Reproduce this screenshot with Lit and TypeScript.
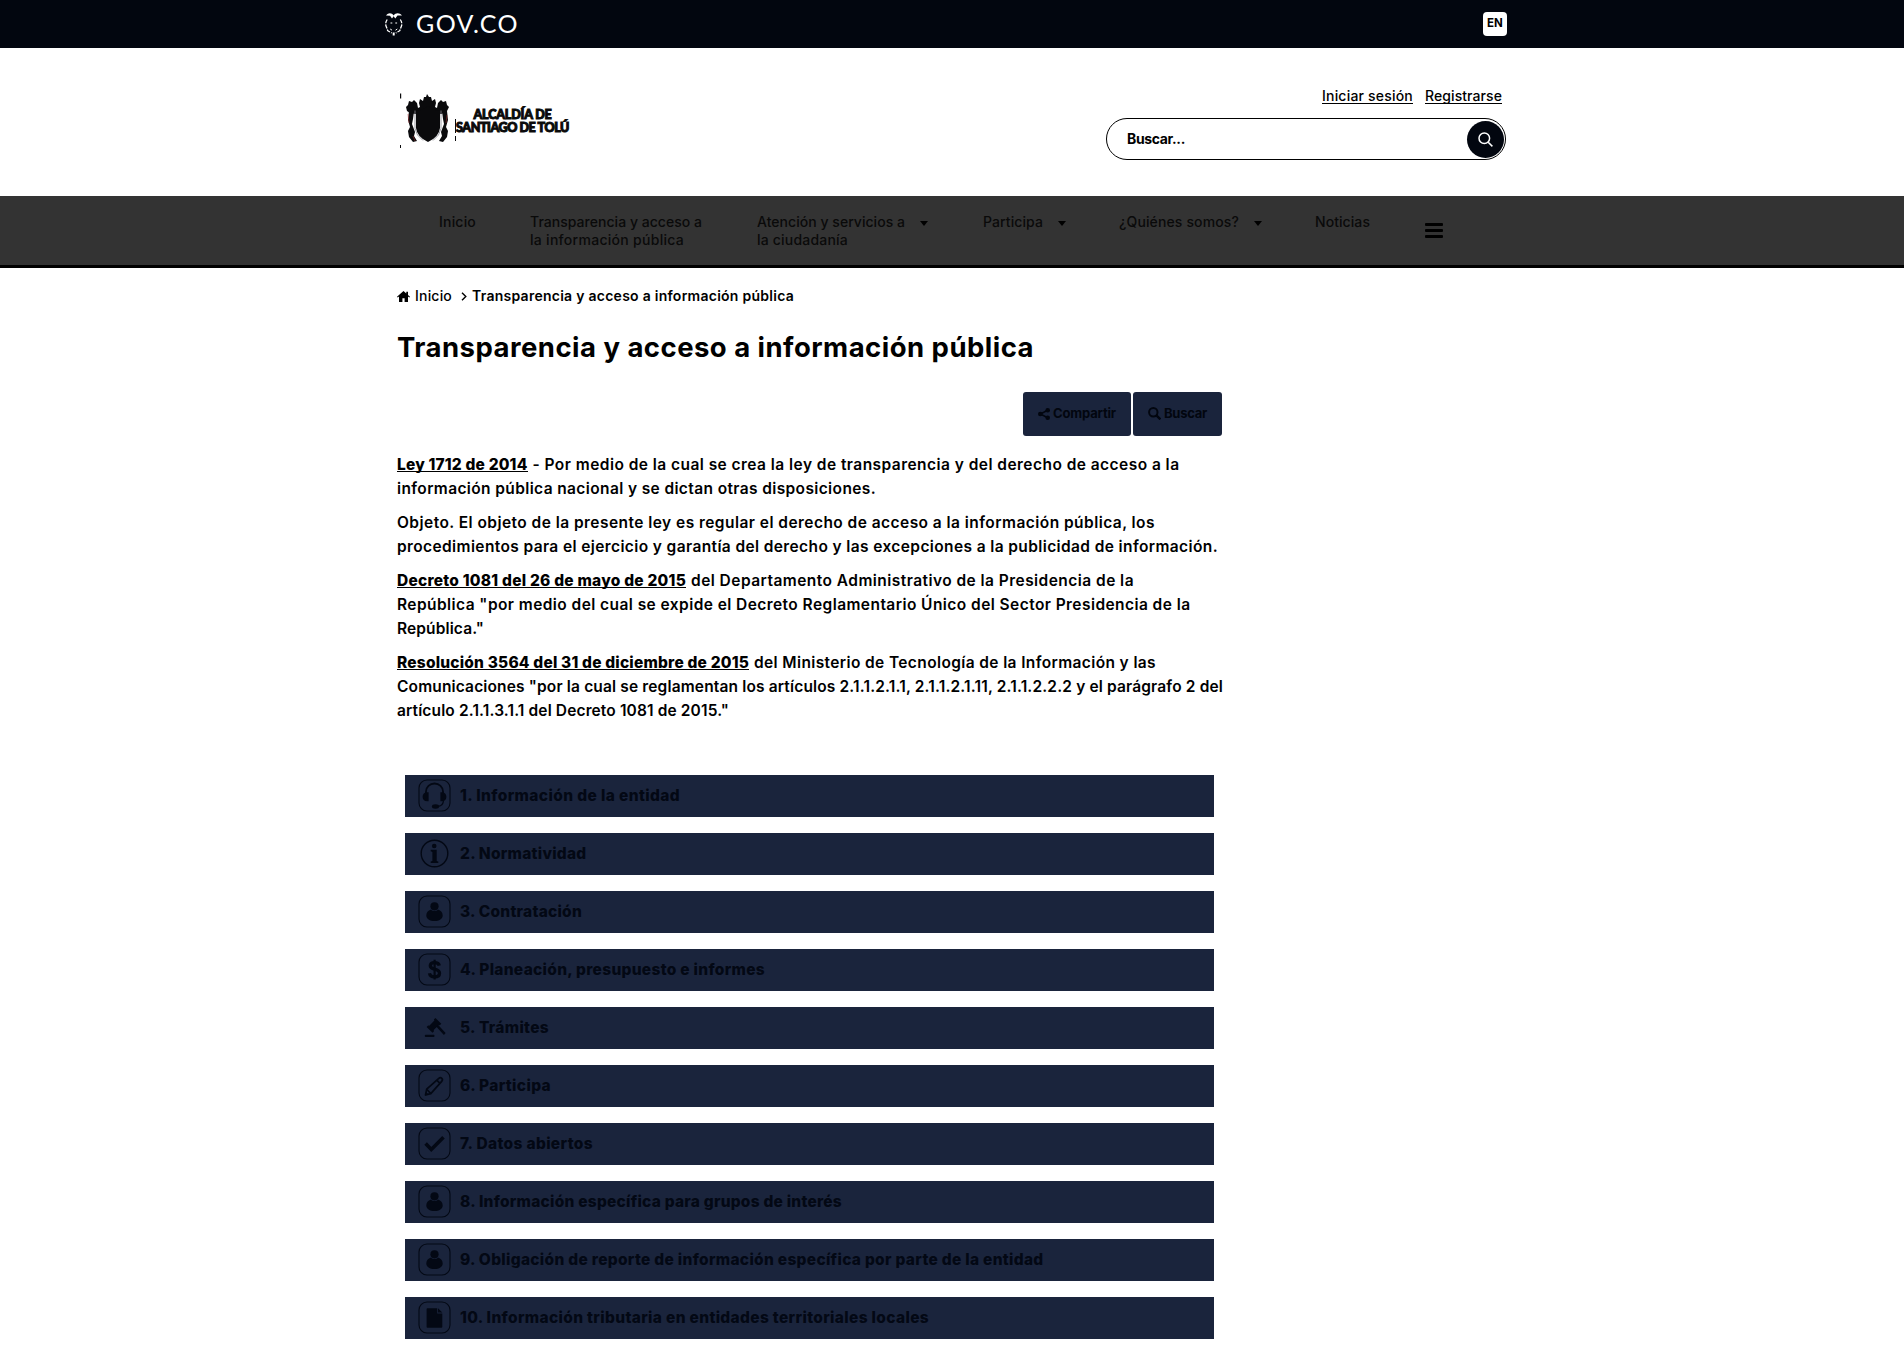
import { LitElement, html, css, svg, nothing } from "lit";
import { customElement, property } from "lit/decorators.js";

/** One line of text whose tracking is computed so that it fills a given width. */
@customElement("fit-text")
class FitText extends LitElement {
  @property({ type: Number }) w = 0;
  static styles = css`
    :host { display: inline-block; white-space: nowrap; }
    .line { display: inline-block; white-space: pre; }
  `;
  render() {
    return html`<span class="line"><slot></slot></span>`;
  }
  async firstUpdated() {
    this.fit();
    await document.fonts.ready;
    this.fit();
  }
  fit() {
    const line = this.renderRoot.querySelector(".line") as HTMLElement;
    const count = (this.textContent ?? "").length;
    line.style.letterSpacing = "0px";
    const natural = line.getBoundingClientRect().width;
    if (this.w && count) line.style.letterSpacing = `${(this.w - natural) / count}px`;
  }
}

const box = svg`<rect x="1" y="1" width="31" height="31" rx="8" fill="none" stroke="currentColor" stroke-width="1.1"/>`;

const icons: Record<string, unknown> = {
  headset: svg`${box}<path d="M8 17v-4.500a8.500 8 0 0 1 17 0V17" fill="none" stroke="currentColor" stroke-width="1.800"/><path d="M10.600 13.200v9C6.500 22.900 4.600 20.500 4.600 17.700s1.900-4.900 6-4.500zM22.400 13.200v9c4.100.7 6-1.700 6-4.500s-1.900-4.900-6-4.500z" fill="currentColor"/><path d="M25.500 21c0 4.500-2 6-5.500 6.300" fill="none" stroke="currentColor" stroke-width="1.200"/><ellipse cx="17.500" cy="27.500" rx="3.600" ry="2.200" fill="currentColor"/>`,
  info: svg`<circle cx="16.500" cy="16.500" r="13.300" fill="none" stroke="currentColor" stroke-width="1.400"/><circle cx="16.200" cy="9" r="2.300" fill="currentColor"/><path d="M12.700 12.700h6v11.200l1.600.6v1.500h-7.600v-1.500l1.700-.6v-9l-1.700-.7z" fill="currentColor"/>`,
  user: svg`${box}<circle cx="16.500" cy="11.300" r="4.100" fill="currentColor"/><path d="M13 14.600c1.500 2 5.500 2 7 0 3 .8 4.700 3.200 4.700 5.800 0 3.400-3.500 5.600-8.200 5.600s-8.200-2.200-8.200-5.600c0-2.600 1.700-5 4.700-5.800z" fill="currentColor"/>`,
  dollar: svg`${box}<path d="M21.300 12.600c-.5-2-2.200-2.900-4.700-2.900-2.600 0-4.300 1.200-4.300 3.100 0 2.200 1.900 2.800 4.400 3.400 2.800.7 4.800 1.500 4.800 4 0 2.300-2 3.600-4.900 3.600s-4.700-1.200-5.100-3.600" fill="none" stroke="currentColor" stroke-width="3.300"/><path d="M16.600 6.700v19.800" stroke="currentColor" stroke-width="2.200"/>`,
  gavel: svg`<g fill="currentColor"><path d="M17.400 6.900 23.300 12.800l-1.500 1.500-1-.3-5.100 5.100.3 1.200-1.500 1.500-5.900-5.900 1.500-1.500 1.200.3 5.100-5.100-.5-1.200z"/><path d="m18.400 15.800 1.800-1.800 7.400 8-1.700 1.900z"/><rect x="6.800" y="23.800" width="9.700" height="2.100" rx=".9"/></g>`,
  pencil: svg`${box}<path d="M7.500 26l1.200-5.800L20.800 9.400c1-.9 2.100-.9 3 0s.8 2-.1 3L12.800 24.600zM19 11.300l3 3M8.900 20.500l3.700 3.900" fill="none" stroke="currentColor" stroke-width="1.700" stroke-linejoin="round"/><path d="m7.200 26.400.8-3.500 2.700 2.700z" fill="currentColor"/>`,
  check: svg`${box}<path d="m7.600 16.600 5.700 5.900L25.500 10.200" fill="none" stroke="currentColor" stroke-width="3.600"/>`,
  file: svg`${box}<path d="M9.600 7.200h9.600v5.200h5.100v13.400q0 1-1 1H9.600q-1 0-1-1V8.200q0-1 1-1zM20 7.300l4.300 4.200H20z" fill="currentColor"/>`,
};

interface Item { icon: string; label: string; w: number; }
const items: Item[] = [
  { icon: "headset", label: "1. Información de la entidad", w: 220 },
  { icon: "info", label: "2. Normatividad", w: 126.500 },
  { icon: "user", label: "3. Contratación", w: 122 },
  { icon: "dollar", label: "4. Planeación, presupuesto e informes", w: 305 },
  { icon: "gavel", label: "5. Trámites", w: 89 },
  { icon: "pencil", label: "6. Participa", w: 91 },
  { icon: "check", label: "7. Datos abiertos", w: 133 },
  { icon: "user", label: "8. Información específica para grupos de interés", w: 382 },
  { icon: "user", label: "9. Obligación de reporte de información específica por parte de la entidad", w: 583.500 },
  { icon: "file", label: "10. Información tributaria en entidades territoriales locales", w: 469 },
];

interface Line { link?: string; lw?: number; text: string; w: number; }
const paragraphs: Line[][] = [
  [
    { link: "Ley 1712 de 2014", lw: 130.500, text: "- Por medio de la cual se crea la ley de transparencia y del derecho de acceso a la", w: 647 },
    { text: "información pública nacional y se dictan otras disposiciones.", w: 479 },
  ],
  [
    { text: "Objeto. El objeto de la presente ley es regular el derecho de acceso a la información pública, los", w: 758 },
    { text: "procedimientos para el ejercicio y garantía del derecho y las excepciones a la publicidad de información.", w: 821 },
  ],
  [
    { link: "Decreto 1081 del 26 de mayo de 2015", lw: 289, text: "del Departamento Administrativo de la Presidencia de la", w: 443 },
    { text: "República \"por medio del cual se expide el Decreto Reglamentario Único del Sector Presidencia de la", w: 793.500 },
    { text: "República.\"", w: 87 },
  ],
  [
    { link: "Resolución 3564 del 31 de diciembre de 2015", lw: 352, text: "del Ministerio de Tecnología de la Información y las", w: 402 },
    { text: "Comunicaciones \"por la cual se reglamentan los artículos 2.1.1.2.1.1, 2.1.1.2.1.11, 2.1.1.2.2.2 y el parágrafo 2 del", w: 826 },
    { text: "artículo 2.1.1.3.1.1 del Decreto 1081 de 2015.\"", w: 332 },
  ],
];

interface NavItem { lines: [string, number][]; col: number; caret?: boolean; }
const nav: NavItem[] = [
  { lines: [["Inicio", 37]], col: 91 },
  { lines: [["Transparencia y acceso a", 172], ["la información pública", 154]], col: 227 },
  { lines: [["Atención y servicios a", 148], ["la ciudadanía", 91]], col: 226, caret: true },
  { lines: [["Participa", 60]], col: 136, caret: true },
  { lines: [["¿Quiénes somos?", 120]], col: 196, caret: true },
  { lines: [["Noticias", 55]], col: 110 },
];

@customElement("app-root")
class AppRoot extends LitElement {
  static styles = css`
    :host {
      display: block; height: 1360px; overflow: hidden; background: #fff; color: #000;
      font-family: Inter, "Liberation Sans", sans-serif; font-size: 14px;
    }
    svg { display: block; flex: none; }
    .gov { background: #02060f; height: 48px; display: flex; align-items: center; padding: 0 397px 0 384px; color: #fff; }
    .govname { font-family: Lato, sans-serif; font-size: 25px; line-height: 46px; height: 48px; margin-left: 12px; margin-right: auto; }
    .lang { width: 24px; height: 24px; border-radius: 4px; background: #fff; color: #000; font-weight: 700; font-size: 11.500px; line-height: 23px; text-align: center; }
    .header { height: 148px; display: flex; justify-content: space-between; padding: 0 398px 0 400px; box-sizing: border-box; }
    .logo { display: flex; padding-top: 44px; }
    .logotext { display: flex; flex-direction: column; align-items: center; padding-top: 17px; font-weight: 900; font-size: 12.500px; line-height: 12.500px; color: #0a0a0a; font-family: Lato, sans-serif; -webkit-text-stroke: 1px #0a0a0a; }
    .tools { display: flex; flex-direction: column; align-items: flex-end; padding-top: 37px; }
    .session { display: flex; gap: 12px; padding-right: 4px; line-height: 21px; height: 33px; font-weight: 500; }
    .slink { height: 17.500px; border-bottom: 1px solid #000; }
    .search { width: 400px; height: 42px; box-sizing: border-box; border: 1.500px solid #000; border-radius: 21px; display: flex; justify-content: space-between; align-items: center; padding: 0 1px 0 20px; font-weight: 700; line-height: 38px; }
    .searchbtn { width: 37px; height: 37px; border-radius: 50%; background: #02060f; display: flex; align-items: center; justify-content: center; }
    .nav { background: #333; height: 52px; border-bottom: 3px solid #000; display: flex; padding: 17px 0 0 439px; color: #0a0a0a; line-height: 18px; font-weight: 500; font-size: 14px; }
    .navitem { display: flex; gap: 15px; }
    .navlines { display: flex; flex-direction: column; }
    .caret { width: 0; height: 0; border: 4.500px solid transparent; border-top: 5px solid #000; border-bottom: 0; margin-top: 8px; }
    .burger { display: flex; flex-direction: column; gap: 2.500px; margin-top: 10px; height: 15px; }
    .bar { width: 18px; height: 3.300px; background: #000; border-radius: 1px; }
    .main { padding-left: 397px; width: 829px; }
    .crumbs { display: flex; align-items: center; height: 20px; padding-top: 18px; line-height: 20px; }
    .crumbhome { margin: 0 9px 0 5px; font-weight: 500; }
    .crumbnow { font-weight: 600; margin-left: 5px; }
    .title { margin: 0; padding-top: 24px; font-size: 27.500px; font-weight: 700; line-height: 34px; height: 34px; }
    .actions { display: flex; justify-content: flex-end; gap: 2px; padding: 28px 4px 0 0; }
    .action { height: 44px; background: #1a243c; color: #02060f; border-radius: 3px; display: flex; align-items: center; gap: 3px; box-sizing: border-box; padding: 0 0 1px 15px; font-size: 13px; font-weight: 700; line-height: 43px; }
    .share { width: 108px; }
    .find { width: 89px; }
    .legal { padding-top: 17px; display: flex; flex-direction: column; gap: 10px; font-size: 15.500px; font-weight: 600; line-height: 24px; }
    .row { display: flex; gap: 5px; height: 24px; }
    .law { font-weight: 800; height: 18px; border-bottom: 1.500px solid #000; }
    .list { display: flex; flex-direction: column; gap: 16px; padding: 52px 0 0 8px; }
    .item { width: 809px; height: 42px; background: #1a243c; color: #030814; display: flex; align-items: center; gap: 9px; box-sizing: border-box; padding: 0 0 1px 13px; font-weight: 800; font-size: 15.500px; line-height: 40px; }
  `;

  private line(l: Line) {
    return html`<div class="row">${l.link ? html`<fit-text class="law" .w=${l.lw}>${l.link}</fit-text>` : nothing}<fit-text .w=${l.w}>${l.text}</fit-text></div>`;
  }

  render() {
    return html`
      <div class="gov">
        <svg width="20" height="24" viewBox="0 0 20 24" fill="none" stroke="#fff" stroke-width="1.300">
          <path d="M2 3.500C4.500.4 7.800.8 9.600 3.400 11.500.6 15.500.3 18 3.500L13.500 3.600 11.300 6.400 9.600 4.300 8 6.400 6 3.700z" fill="#fff" stroke="none"/>
          <path d="M3.200 7.500Q.8 11 2.200 14.500t1.500 4.200l4 2.300M16.300 7.500q2.400 3.500 1 7t-1.500 4.200l-4 2.300" stroke-dasharray="4 1.200"/>
          <path d="M6.500 11h1.800m3 0h1.800M6.200 17l1.800 1.200m5.300-1.200-1.800 1.200" stroke-width="1"/>
          <path d="M9.700 20.500v3" stroke-width="2"/>
        </svg>
        <div class="govname"><fit-text .w=${103}>GOV.CO</fit-text></div>
        <div class="lang">EN</div>
      </div>
      <div class="header">
        <div class="logo">
          <svg width="56" height="58" viewBox="0 0 56 58" fill="#0a0a0c">
            <path d="M0 1.500h1.200v5H0zM0 53h1v3H0zM55 27h1v14h-1zM55 44h1v5h-1z"/>
            <path d="M6 15l2-2 1-4 3 1 2-2 3 3 1 5 2-1-1-4 1-4 3 2 1-4h2l1-3 2 3h2l1 4 3-2 1 4-1 4 2 1 1-5 3-3 2 2 3-1 1 4 2 2-2 4-4 2-1 1H15l-5-1-3-2z"/>
            <path d="M16 18q6 1 12-4 6 5 12 4v18q-1 9-12 14-11-5-12-14z"/>
            <path d="M9 19h5l-1 8-1 5 3 8-1 4 3 5-4 1-4-5-1-6 2-4-2-7zM47 19h-5l1 8 1 5-3 8 1 4-3 5 4 1 4-5 1-6-2-4 2-7z"/>
            <path d="M15 18.500v18q1 7 8 12M41 18.500v18q-1 7-8 12" fill="none" stroke="#85858d" stroke-width=".8"/>
            <path d="M8 22l1 9M13 44l2 5M47 23l-1 8" fill="none" stroke="#a33" stroke-width=".5"/>
          </svg>
          <div class="logotext">
            <fit-text .w=${78}>ALCALDÍA DE</fit-text>
            <fit-text .w=${113}>SANTIAGO DE TOLÚ</fit-text>
          </div>
        </div>
        <div class="tools">
          <div class="session">
            <fit-text class="slink" .w=${91}>Iniciar sesión</fit-text>
            <fit-text class="slink" .w=${77}>Registrarse</fit-text>
          </div>
          <div class="search">
            <fit-text .w=${58}>Buscar...</fit-text>
            <div class="searchbtn">
              <svg width="15" height="15" viewBox="0 0 15 15" fill="none" stroke="#fff" stroke-width="1.500"><circle cx="6.300" cy="6.300" r="5.300"/><path d="m10.200 10.200 4.200 4.200"/></svg>
            </div>
          </div>
        </div>
      </div>
      <div class="nav">
        ${nav.map((n) => html`<div class="navitem" style="width:${n.col}px">
          <div class="navlines">${n.lines.map(([t, w]) => html`<div><fit-text .w=${w}>${t}</fit-text></div>`)}</div>
          ${n.caret ? html`<span class="caret"></span>` : nothing}
        </div>`)}
        <div class="burger"><span class="bar"></span><span class="bar"></span><span class="bar"></span></div>
      </div>
      <div class="main">
        <div class="crumbs">
          <svg width="13" height="11" viewBox="0 0 13 11"><path d="M6.500 0 0 5.700l.7.8L2 5.600V11h3.400V7.300h2.200V11H11V5.600l1.300.9.700-.8-2-1.800V.7H9.300v1.700z"/></svg>
          <span class="crumbhome"><fit-text .w=${37}>Inicio</fit-text></span>
          <svg width="6" height="9" viewBox="0 0 6 9" fill="none" stroke="#000" stroke-width="1.400"><path d="m1 .8 3.800 3.700L1 8.200"/></svg>
          <fit-text class="crumbnow" .w=${322}>Transparencia y acceso a información pública</fit-text>
        </div>
        <h1 class="title"><fit-text .w=${637}>Transparencia y acceso a información pública</fit-text></h1>
        <div class="actions">
          <div class="action share">
            <svg width="12" height="12" viewBox="0 0 12 12" fill="currentColor"><path d="M10 2 2.500 6 10 10" fill="none" stroke="currentColor" stroke-width="1.500"/><circle cx="9.700" cy="2.300" r="2.300"/><circle cx="2.300" cy="6" r="2.300"/><circle cx="9.700" cy="9.700" r="2.300"/></svg>
            <fit-text .w=${63}>Compartir</fit-text>
          </div>
          <div class="action find">
            <svg width="13" height="13" viewBox="0 0 13 13" fill="none" stroke="currentColor" stroke-width="2"><circle cx="5.300" cy="5.300" r="4.200"/><path d="m8.400 8.400 4 4" stroke-width="2.400"/></svg>
            <fit-text .w=${43}>Buscar</fit-text>
          </div>
        </div>
        <div class="legal">${paragraphs.map((p) => html`<div>${p.map((l) => this.line(l))}</div>`)}</div>
        <div class="list">
          ${items.map((i) => html`<div class="item">
            <svg width="33" height="33" viewBox="0 0 33 33">${icons[i.icon]}</svg>
            <fit-text .w=${i.w}>${i.label}</fit-text>
          </div>`)}
        </div>
      </div>
    `;
  }
}
